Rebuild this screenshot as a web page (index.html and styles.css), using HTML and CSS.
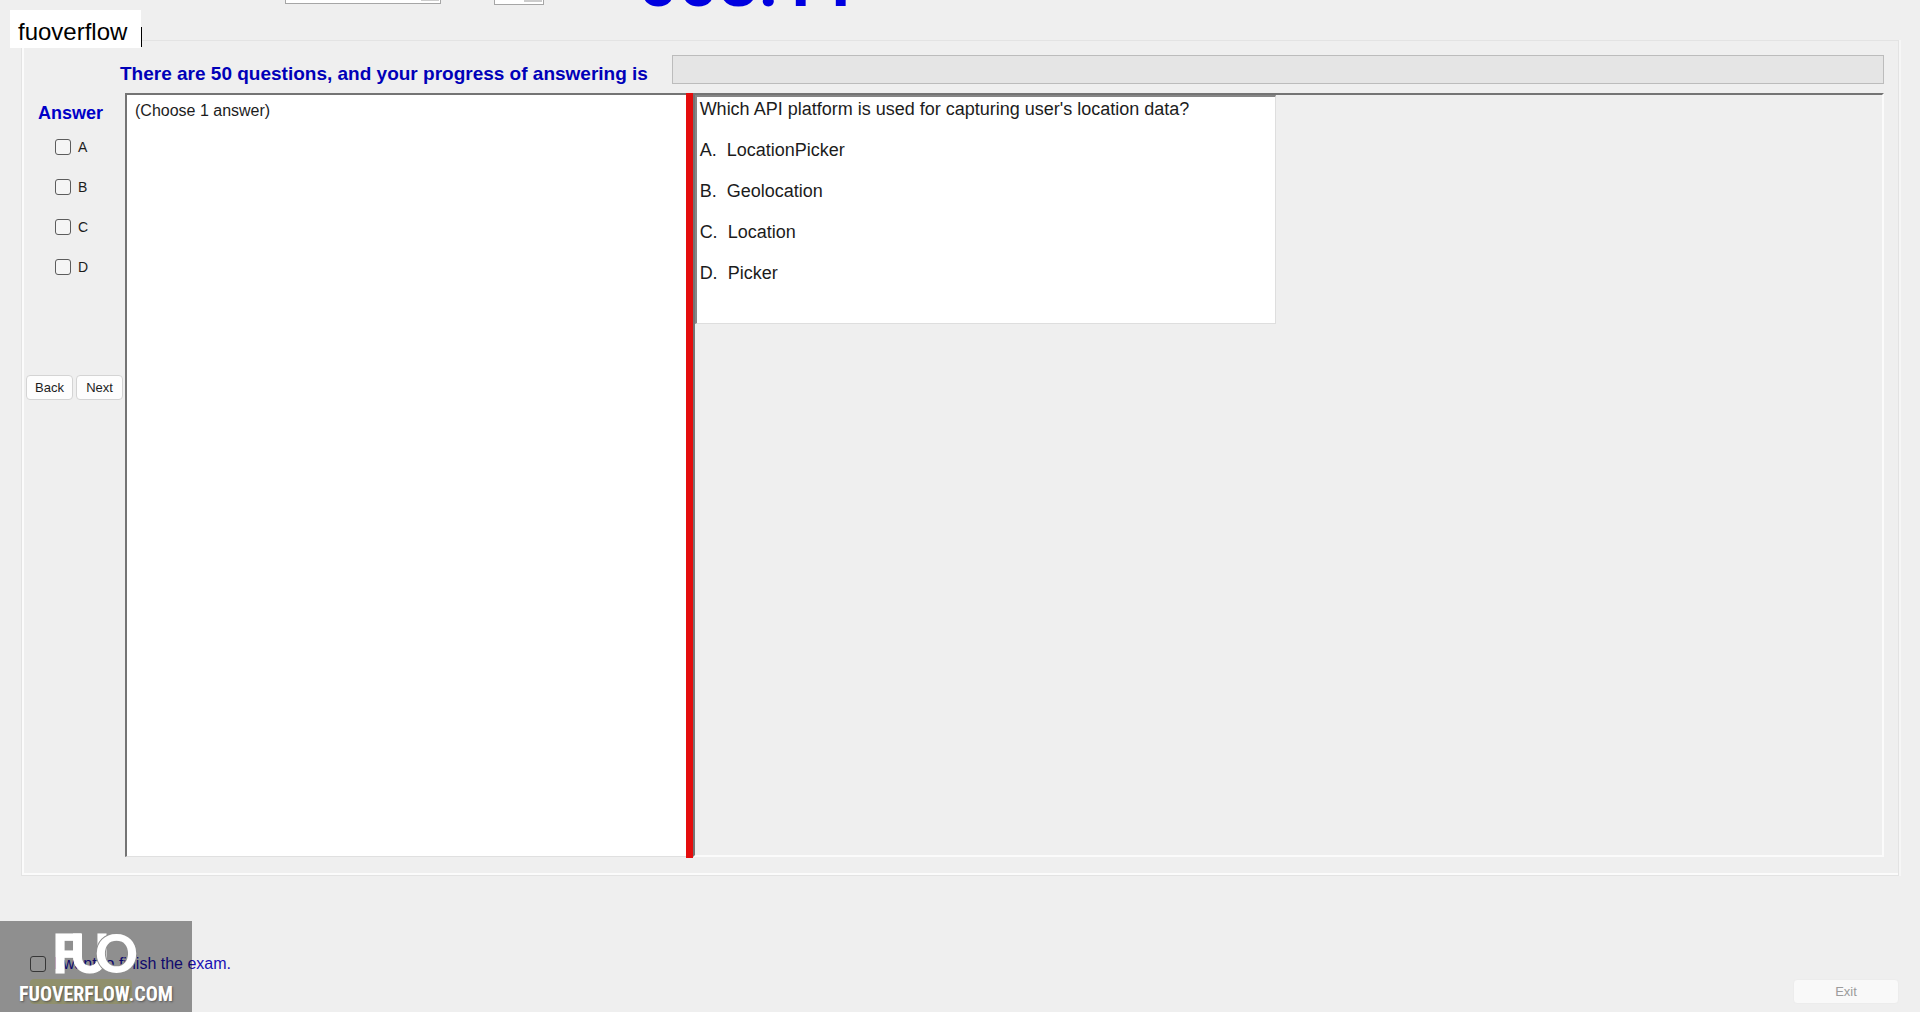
FILE: index.html
```html
<!DOCTYPE html>
<html lang="en">
<head>
    <meta charset="UTF-8">
    <meta name="viewport" content="width=device-width, initial-scale=1.0">
    <title>Exam</title>
    <link rel="stylesheet" href="styles.css">
</head>
<body>
    <header class="top-bar">
        <select class="combo combo-wide" aria-label="Font"><option></option></select>
        <select class="combo combo-small" aria-label="Size"><option></option></select>
        <div class="timer">008:11</div>
    </header>
    <div class="tag">fuoverflow</div>

    <main class="exam-box">
        <div class="progress-row">
            <label for="progress">There are 50 questions, and your progress of answering is</label>
            <progress id="progress" value="0" max="50"></progress>
        </div>

        <div class="work-area">
            <form class="answers">
                <h2>Answer</h2>
                <label><input type="checkbox" name="answer" value="A">A</label>
                <label><input type="checkbox" name="answer" value="B">B</label>
                <label><input type="checkbox" name="answer" value="C">C</label>
                <label><input type="checkbox" name="answer" value="D">D</label>
                <div class="nav-buttons">
                    <button type="button">Back</button>
                    <button type="button">Next</button>
                </div>
            </form>
            <section class="note-panel">(Choose 1 answer)</section>
            <div class="splitter"></div>
            <section class="question-panel">
                <div class="question">
                    <p>Which API platform is used for capturing user's location data?</p>
                    <p>A.&nbsp; LocationPicker</p>
                    <p>B.&nbsp; Geolocation</p>
                    <p>C.&nbsp; Location</p>
                    <p>D.&nbsp; Picker</p>
                </div>
            </section>
        </div>
    </main>

    <footer class="bottom-bar">
        <label class="finish"><input type="checkbox">I want to finish the exam.</label>
        <div class="bottom-buttons">
            <button type="button" class="finish-btn" aria-label="Finish"></button>
            <button type="button" class="exit-btn" disabled>Exit</button>
        </div>
    </footer>

    <div class="watermark">
        <svg class="logo" width="96" height="46" viewBox="0 0 96 46">
            <text class="mark" x="4" y="43">F</text>
            <text class="mark" x="22" y="43">U</text>
            <text class="mark mark-ring" x="47" y="43">O</text>
        </svg>
        <div class="site">FUOVERFLOW.COM</div>
    </div>
</body>
</html>
```
FILE: styles.css
```css
* {
    box-sizing: border-box;
}
body {
    margin: 0;
    min-height: 100vh;
    display: flex;
    flex-direction: column;
    background-color: #efefef;
    color: #1c1c1c;
    font-family: "Liberation Sans", Arial, sans-serif;
    font-size: 13px;
    overflow: hidden;
}
h2, p {
    margin: 0;
}
input[type="checkbox"] {
    appearance: none;
    width: 16px;
    height: 16px;
    margin: 0;
    border: 1px solid #5c5c5c;
    border-radius: 3px;
    background-color: #f5f5f5;
}
button {
    height: 25px;
    padding: 0;
    border: 1px solid #d4d4d4;
    border-radius: 4px;
    background-color: #fdfdfd;
    color: #1c1c1c;
    font: inherit;
}
/* top bar is scrolled half out of view */
.top-bar {
    display: flex;
    align-items: flex-end;
    height: 8px;
    padding-left: 285px;
    margin-bottom: 32px;
}
.combo {
    appearance: none;
    height: 24px;
    border: 1px solid #a6a6a6;
    border-radius: 0;
    background: linear-gradient(#cccccc, #cccccc) right 1px top 0 / 18px 20px no-repeat #ffffff;
}
.combo-wide {
    width: 156px;
    margin: 0 53px 4px 0;
}
.combo-small {
    width: 50px;
    margin: 0 94px 3px 0;
}
.timer {
    height: 70px;
    line-height: 88px;
    color: #0000e0;
    font-family: Roboto, "Liberation Sans", sans-serif;
    font-size: 70px;
    font-weight: bold;
}
.tag {
    position: absolute;
    left: 10px;
    top: 10px;
    padding: 5px 14px 0 8px;
    line-height: 33px;
    background-color: #ffffff;
    color: #000000;
    font-size: 24px;
}
/* text caret */
.tag::after {
    content: "";
    position: absolute;
    right: -1px;
    bottom: 1px;
    width: 1px;
    height: 20px;
    background-color: #000000;
}
.exam-box {
    margin: 0 21px 0 21px;
    padding: 13px 14px 18px 4px;
    border: 1px solid #e3e3e3;
    box-shadow: inset 2px 0 0 #fbfbfb, inset 0 -2px 0 #fbfbfb, 2px 0 0 #f6f6f6;
    height: calc(100vh - 176px);
    display: flex;
    flex-direction: column;
}
.progress-row {
    display: flex;
    align-items: center;
    gap: 24px;
    padding-left: 94px;
    margin-bottom: 9px;
    color: #0000b8;
    font-size: 19px;
    font-weight: bold;
}
.progress-row label {
    padding-top: 10px;
    line-height: 20px;
    white-space: nowrap;
}
progress {
    appearance: none;
    flex: 1;
    height: 29px;
    border: 1px solid #bcbcbc;
    background-color: #e5e5e5;
}
progress::-webkit-progress-bar {
    background-color: #e5e5e5;
}
.work-area {
    display: grid;
    grid-template-columns: 99px 8fr 7px 17fr;
    flex: 1;
}
.answers {
    display: flex;
    flex-direction: column;
}
.answers h2 {
    margin: 9px 0 15px 12px;
    line-height: 22px;
    color: #0000c8;
    font-size: 18px;
}
.answers label {
    display: flex;
    align-items: center;
    gap: 7px;
    height: 16px;
    margin: 0 0 24px 29px;
    font-size: 14px;
}
.nav-buttons {
    display: flex;
    gap: 3px;
    margin-top: 76px;
}
.nav-buttons button {
    width: 47px;
}
.note-panel {
    padding: 6px 8px;
    border: 2px solid #747474;
    border-right: none;
    border-bottom: 1px solid #e0e0e0;
    background-color: #ffffff;
    font-size: 16px;
    line-height: 20px;
}
.splitter {
    background-color: #e40d0d;
    margin-bottom: -1px;
}
.question-panel {
    border: 2px solid #747474;
    border-right: 2px solid #fbfbfb;
    border-bottom: 2px solid #fbfbfb;
}
.question {
    width: 49%;
    height: 229px;
    padding: 2px 0 0 3px;
    border: 2px solid #868686;
    border-right: 1px solid #dedede;
    border-bottom: 1px solid #dedede;
    background-color: #ffffff;
    font-size: 18px;
}
.question p {
    line-height: 21px;
    margin-bottom: 20px;
}
.bottom-bar {
    padding: 78px 21px 0 30px;
}
.finish {
    display: flex;
    align-items: center;
    gap: 8px;
    color: #1a10b4;
    font-size: 16px;
    line-height: 20px;
}
.bottom-buttons {
    display: flex;
    justify-content: space-between;
    margin-top: 5px;
}
.finish-btn {
    width: 102px;
    border: none;
    background-color: #f0f0b4;
}
.exit-btn {
    width: 106px;
    border-color: #ececec;
    background-color: #f9f9f9;
    color: #9c9c9c;
}
.watermark {
    position: absolute;
    left: 0;
    bottom: 0;
    width: 192px;
    height: 91px;
    padding-top: 9px;
    background-color: rgba(0, 0, 0, 0.4);
    color: #ffffff;
    text-align: center;
}
.logo {
    display: block;
    margin: 0 auto;
}
.mark {
    fill: #ffffff;
    stroke: #ffffff;
    stroke-width: 1px;
    font-family: Lato, sans-serif;
    font-size: 53px;
    font-weight: 900;
}
/* thin gap where the ring crosses the U */
.mark-ring {
    stroke: #8f8f8f;
    stroke-width: 2px;
    paint-order: stroke;
}
.site {
    font-family: "Liberation Sans Narrow", "Roboto Condensed", "Liberation Sans", sans-serif;
    font-size: 20px;
    font-weight: bold;
    line-height: 36px;
    text-shadow: 1px 1px 2px #555555;
}
```
